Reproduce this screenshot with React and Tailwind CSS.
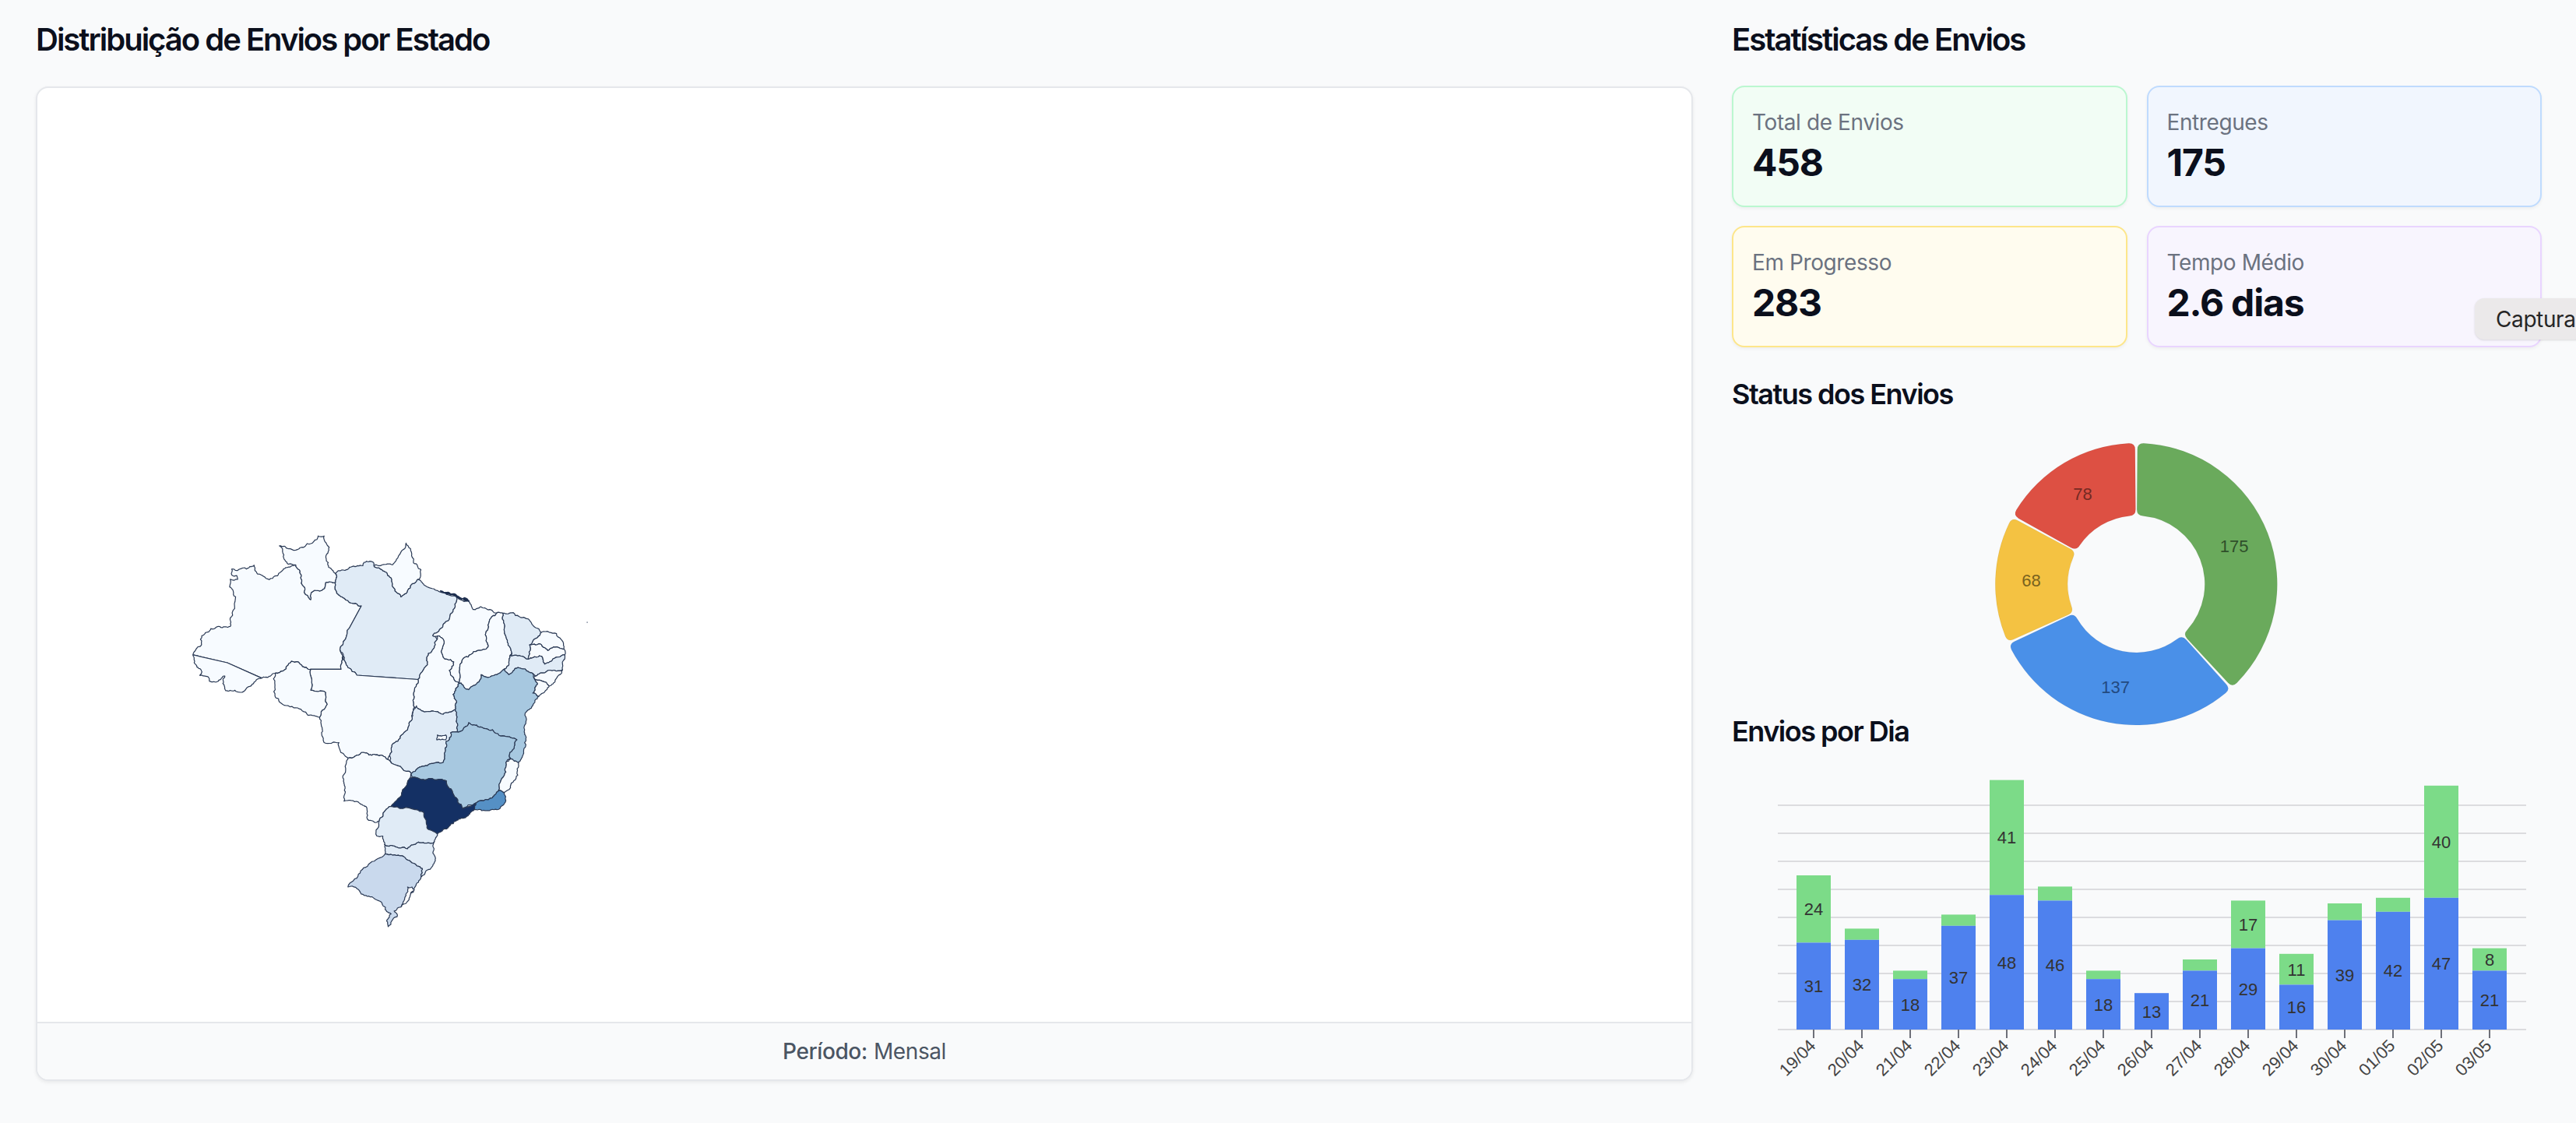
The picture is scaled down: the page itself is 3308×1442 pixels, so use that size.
import React from 'react';

const stats = [
  { label: 'Total de Envios', value: '458', box: 'bg-[#f2fdf5] border-[#bbf7d0]' },
  { label: 'Entregues', value: '175', box: 'bg-[#f1f6fe] border-[#bfdbfe]' },
  { label: 'Em Progresso', value: '283', box: 'bg-[#fffcef] border-[#fde68a]' },
  { label: 'Tempo Médio', value: '2.6 dias', box: 'bg-[#f8f5fe] border-[#e9d5ff]' },
];

const statusData = [
  { value: 175, color: '#6aaa5c', text: '#2f4f2a' },
  { value: 137, color: '#4a90e8', text: '#234a80' },
  { value: 68, color: '#f4c242', text: '#79621f' },
  { value: 78, color: '#dd5043', text: '#742a23' },
];

const days = [
  ['19/04', 31, 24], ['20/04', 32, 4], ['21/04', 18, 3], ['22/04', 37, 4], ['23/04', 48, 41],
  ['24/04', 46, 5], ['25/04', 18, 3], ['26/04', 13, 0], ['27/04', 21, 4], ['28/04', 29, 17],
  ['29/04', 16, 11], ['30/04', 39, 6], ['01/05', 42, 5], ['02/05', 47, 40], ['03/05', 21, 8],
];

const WHITE = '#f7fbff';
const LIGHT = '#e0ebf6';
const MID = '#c9d9ed';
const BLUE = '#a7c8e0';

// state outlines, coordinates in a 1568x1568 box stretched to 600x570
const states = [
  [WHITE, '125,525 135,505 150,495 150,470 165,450 185,432 215,425 250,425 258,385 268,320 260,300 248,285 250,258 275,258 272,245 255,243 255,222 305,222 330,208 342,240 370,255 392,255 420,232 450,215 470,207 482,225 490,260 498,305 520,330 522,305 545,298 560,295 570,270 603,270 606,300 625,320 650,340 690,352 650,430 618,507 628,530 622,576 520,576 490,562 478,550 455,548 440,565 430,580 400,590 385,600 355,607 240,553'],
  [WHITE, '125,525 240,553 355,607 330,622 300,650 290,657 265,650 235,652 230,635 232,600 210,618 180,618 175,602 148,598 155,585 135,560'],
  [WHITE, '415,140 445,150 470,155 490,145 530,125 545,105 565,105 572,130 582,145 572,185 580,215 603,238 603,270 570,270 560,295 545,298 522,305 520,330 498,305 490,260 482,225 470,207 445,205 430,172'],
  [LIGHT, '603,238 625,225 660,213 695,210 700,198 730,198 735,215 760,225 785,250 800,290 822,320 835,310 855,280 880,258 900,278 945,298 1010,320 1005,355 985,400 960,430 930,458 945,470 935,495 915,520 912,560 880,612 675,597 645,570 630,530 618,507 650,430 690,352 650,340 625,320 606,300 603,270'],
  [WHITE, '735,207 760,207 795,207 815,175 840,130 855,150 865,200 890,225 885,258 880,258 855,280 835,310 822,320 800,290 785,250 760,225 735,215'],
  [WHITE, '1010,320 1045,335 1065,365 1090,355 1120,365 1148,375 1125,395 1115,420 1110,465 1112,500 1080,510 1035,535 1020,570 1018,625 1000,610 985,580 1000,550 975,540 960,520 965,470 945,458 930,458 960,430 985,400 1005,355'],
  [WHITE, '945,458 965,470 960,520 975,540 1000,550 985,580 1000,610 1018,625 998,665 1010,690 1005,718 965,735 940,725 915,725 880,715 868,710 865,660 880,612 912,560 915,520 935,495 945,470'],
  [WHITE, '1148,375 1165,378 1170,430 1180,480 1195,520 1185,550 1170,575 1140,595 1115,605 1092,595 1085,620 1050,648 1035,640 1025,625 1018,625 1020,570 1035,535 1080,510 1112,500 1110,465 1115,420 1125,395'],
  [LIGHT, '1165,378 1200,376 1240,395 1265,420 1295,445 1270,470 1255,490 1250,540 1230,530 1190,528 1195,520 1180,480 1170,430'],
  [WHITE, '1295,445 1345,450 1360,470 1370,505 1335,497 1315,510 1295,490 1275,490 1255,490 1270,470'],
  [WHITE, '1255,490 1275,490 1295,490 1315,510 1335,497 1370,505 1373,525 1330,545 1305,558 1295,530 1265,535 1250,540'],
  [LIGHT, '1190,528 1230,530 1250,540 1265,535 1295,530 1305,558 1330,545 1373,525 1365,578 1310,585 1275,600 1265,590 1240,575 1215,570 1185,595 1170,575 1185,550 1195,520'],
  [WHITE, '1268,605 1275,600 1310,585 1365,578 1340,615 1320,635'],
  [WHITE, '1268,605 1320,635 1300,660 1285,672 1265,660 1280,630'],
  [BLUE, '1018,625 1025,625 1035,640 1050,648 1085,620 1092,595 1115,605 1140,595 1170,575 1185,595 1215,570 1240,575 1265,590 1268,605 1280,630 1265,660 1285,672 1265,705 1240,730 1238,790 1242,820 1232,880 1218,905 1190,890 1188,870 1212,825 1170,812 1130,790 1085,780 1050,765 1015,798 1008,760 1005,718 1010,690 998,665'],
  [LIGHT, '875,705 880,715 915,725 940,725 965,735 1005,718 1008,760 1015,798 990,800 985,825 975,830 970,880 965,905 920,910 880,925 858,943 795,910 785,880 790,855 820,820 845,790 860,745'],
  [WHITE, '945,808 973,808 973,825 943,825'],
  [WHITE, '520,576 622,576 628,530 645,570 675,597 880,612 865,660 868,710 860,745 845,790 820,820 790,855 785,880 780,895 760,880 725,880 690,870 645,890 618,860 615,835 565,835 560,795 550,745 575,700 570,658 520,650'],
  [WHITE, '400,590 430,580 440,565 455,548 478,550 490,562 520,576 520,650 570,658 575,700 550,745 510,738 470,712 420,695 400,670 395,610'],
  [WHITE, '645,890 690,870 725,880 760,880 780,895 795,910 858,943 850,965 825,1015 790,1060 770,1075 750,1112 715,1110 705,1060 680,1045 632,1042 635,990 628,960 640,905'],
  [BLUE, '858,943 880,925 920,910 965,905 970,880 975,830 985,825 990,800 1015,798 1050,765 1085,780 1130,790 1170,812 1212,825 1188,870 1190,890 1175,905 1170,950 1150,1005 1130,1030 1070,1050 1030,1068 1000,1020 975,970 910,965 860,958'],
  [WHITE, '1190,893 1218,905 1215,950 1190,990 1170,1012 1150,1005 1170,950 1175,905'],
  ['#5590c5', '1150,1005 1170,1012 1175,1040 1145,1072 1105,1075 1065,1075 1040,1068 1070,1050 1130,1030'],
  ['#143064', '860,958 910,965 975,970 1000,1020 1030,1068 1075,1050 1070,1070 1050,1090 1040,1100 1010,1110 985,1130 945,1158 910,1135 900,1085 870,1072 790,1060 825,1015 850,965'],
  [LIGHT, '790,1060 870,1072 900,1085 910,1135 945,1158 935,1185 905,1190 875,1190 845,1210 800,1200 768,1195 762,1165 742,1165 750,1112 770,1075'],
  [LIGHT, '768,1195 800,1200 845,1210 875,1190 905,1190 935,1185 930,1225 938,1240 930,1270 890,1310 895,1280 860,1260 820,1235 770,1228'],
  [MID, '770,1228 820,1235 860,1260 895,1280 890,1310 870,1345 830,1405 800,1430 810,1450 780,1485 775,1465 790,1440 775,1432 760,1405 720,1380 700,1375 665,1345 645,1345 680,1300 720,1260'],
  ['#ffffff', '845,1345 860,1345 868,1355 850,1390 825,1410 840,1375'],
];

// small deterministic noise so the borders look like real ones.
// the offset depends only on the edge, so neighbours share the same line
const noise = (a, b) => {
  const v = Math.sin(a * 12.9898 + b * 78.233) * 43758.5453;
  return v - Math.floor(v) - 0.5;
};

const roughEdge = (x1, y1, x2, y2, depth) => {
  const len = Math.hypot(x2 - x1, y2 - y1);
  if (depth === 0 || len > 85 || len < 7) return [];
  const mx = (x1 + x2) / 2;
  const my = (y1 + y2) / 2;
  const amount = noise(mx, my) * Math.min(len * 0.4, 9);
  const sign = x1 < x2 || (x1 === x2 && y1 < y2) ? 1 : -1;
  const px = mx + ((y2 - y1) / len) * amount * sign;
  const py = my - ((x2 - x1) / len) * amount * sign;
  return [...roughEdge(x1, y1, px, py, depth - 1), [px, py], ...roughEdge(px, py, x2, y2, depth - 1)];
};

const roughPath = (pointsText) => {
  const pts = pointsText.split(' ').map((p) => p.split(',').map(Number));
  const out = [];
  pts.forEach((p, i) => {
    const n = pts[(i + 1) % pts.length];
    out.push(p, ...roughEdge(p[0], p[1], n[0], n[1], 3));
  });
  return 'M' + out.map((p) => `${p[0].toFixed(1)} ${p[1].toFixed(1)}`).join('L') + 'Z';
};

const BrazilMap = () => (
  <svg width="600" height="570" viewBox="0 0 1568 1568" preserveAspectRatio="none">
    {states.map(([fill, pts], i) => (
      <path key={i} d={roughPath(pts)} fill={fill} stroke="#2b3a55" strokeWidth="1.2" strokeLinejoin="round" vectorEffect="non-scaling-stroke" />
    ))}
    <path d={roughPath('955,298 985,306 1010,316 1045,328 1052,336 1010,322 985,310')} fill="#1e2f4f" stroke="#1e2f4f" strokeWidth="1.6" vectorEffect="non-scaling-stroke" />
    <circle cx="1448" cy="410" r="2.5" fill="#8a93a3" />
  </svg>
);

// rounded ring slice, angles in degrees clockwise from the top
const polar = (r, deg) => {
  const a = (deg * Math.PI) / 180;
  return [r * Math.sin(a), -r * Math.cos(a)];
};

const slicePath = (start, end, R, r, c) => {
  const dO = (c / R) * (180 / Math.PI);
  const dI = (c / r) * (180 / Math.PI);
  const f = (p) => `${p[0].toFixed(2)} ${p[1].toFixed(2)}`;
  const large = end - start > 180 ? 1 : 0;
  return [
    `M${f(polar(R, start + dO))}`,
    `A${R} ${R} 0 ${large} 1 ${f(polar(R, end - dO))}`,
    `Q${f(polar(R, end))} ${f(polar(R - c, end))}`,
    `L${f(polar(r + c, end))}`,
    `Q${f(polar(r, end))} ${f(polar(r, end - dI))}`,
    `A${r} ${r} 0 ${large} 0 ${f(polar(r, start + dI))}`,
    `Q${f(polar(r, start))} ${f(polar(r + c, start))}`,
    `L${f(polar(R - c, start))}`,
    `Q${f(polar(R, start))} ${f(polar(R, start + dO))}`,
    'Z',
  ].join('');
};

const StatusDonut = () => {
  const total = statusData.reduce((sum, s) => sum + s.value, 0);
  let angle = 0;
  return (
    <svg width="1040" height="380" viewBox="-519.3 -190 1040 380" className="block">
      {statusData.map((s) => {
        const start = angle;
        const end = angle + (s.value / total) * 360;
        angle = end;
        const mid = (start + end) / 2;
        const [lx, ly] = polar(135, mid);
        return (
          <g key={s.value}>
            <path d={slicePath(start + 0.5, end - 0.5, 181, 88, 8)} fill={s.color} stroke="#000000" strokeOpacity="0.05" />
            <text x={lx} y={ly + 8} textAnchor="middle" fontSize="22" fill={s.text} fontFamily="'Liberation Sans', sans-serif">{s.value}</text>
          </g>
        );
      })}
    </svg>
  );
};

const DailyBars = () => {
  const baseY = 1322;
  const unit = 3.6;
  const grid = [1034, 1070, 1106, 1142, 1178, 1214, 1250, 1286, 1322];
  const font = "'Liberation Sans', sans-serif";
  return (
    <svg width="1040" height="419" viewBox="2224 963 1040 419" className="block">
      {grid.map((y) => (
        <line key={y} x1="2283" x2="3244" y1={y} y2={y} stroke="#dcdcdf" strokeWidth="2" />
      ))}
      {days.map(([day, blue, green], i) => {
        const cx = 2329 + i * 62;
        const blueTop = baseY - blue * unit;
        const greenTop = blueTop - green * unit;
        return (
          <g key={day}>
            <rect x={cx - 22} y={greenTop} width="44" height={green * unit} fill="#7cdb88" />
            <rect x={cx - 22} y={blueTop} width="44" height={blue * unit} fill="#4e81ee" />
            <line x1={cx} x2={cx} y1={baseY} y2={baseY + 11} stroke="#6e7079" strokeWidth="2" />
            <text x={cx} y={blueTop + (blue * unit) / 2 + 8} textAnchor="middle" fontSize="22" fill="#333333" fontFamily={font}>{blue}</text>
            {green >= 8 && (
              <text x={cx} y={greenTop + (green * unit) / 2 + 8} textAnchor="middle" fontSize="22" fill="#333333" fontFamily={font}>{green}</text>
            )}
            <text transform={`translate(${cx + 4} 1344) rotate(-45)`} textAnchor="end" fontSize="22" fill="#444444" fontFamily={font}>{day}</text>
          </g>
        );
      })}
    </svg>
  );
};

const App = () => {
  return (
    <div className="relative h-[1442px] overflow-hidden bg-[#f9fafb] font-['Inter',sans-serif] text-[#0b0f1c]">
      <div className="flex gap-[50px] pl-[46px] pr-[44px] pt-[27px]">
        {/* Map column */}
        <div className="flex-1 min-w-0">
          <h2 className="h-[48px] mb-[36px] text-[40px] leading-[48px] font-semibold tracking-[-2px]">Distribuição de Envios por Estado</h2>
          <div className="h-[1277px] flex flex-col overflow-hidden rounded-2xl border-2 border-[#e5e7eb] bg-white shadow-[0_2px_5px_rgba(0,0,0,0.07)]">
            <div className="flex-1 flex items-end pl-[152px] pb-[92px]">
              <BrazilMap />
            </div>
            <div className="h-[74px] flex items-center justify-center border-t-2 border-[#e5e7eb] bg-[#f9fafb] text-[28px] tracking-[-0.4px] text-[#4b5563]">
              <span className="font-medium">Período:</span>
              <span className="ml-[8px]">Mensal</span>
            </div>
          </div>
        </div>

        {/* Stats column */}
        <div className="w-[1040px] shrink-0">
          <h2 className="h-[48px] mb-[35px] text-[40px] leading-[48px] font-semibold tracking-[-2px]">Estatísticas de Envios</h2>
          <div className="grid grid-cols-2 gap-x-[25px] gap-y-[24px]">
            {stats.map((s) => (
              <div key={s.label} className={`h-[156px] rounded-2xl border-2 px-[24px] pt-[25px] shadow-[0_2px_4px_rgba(0,0,0,0.05)] ${s.box}`}>
                <p className="text-[28px] leading-[40px] tracking-[-0.4px] text-[#6b7280]">{s.label}</p>
                <p className="text-[48px] leading-[64px] font-bold tracking-[-1.2px]">{s.value}</p>
              </div>
            ))}
          </div>

          <h3 className="h-[48px] mt-[36px] text-[36px] leading-[48px] font-semibold tracking-[-1.5px]">Status dos Envios</h3>
          <div className="mt-[30px]">
            <StatusDonut />
          </div>

          <h3 className="relative h-[48px] -mt-[25px] text-[36px] leading-[48px] font-semibold tracking-[-1.5px]">Envios por Dia</h3>
          <DailyBars />
        </div>
      </div>

      <div className="absolute top-[383px] left-[3178px] h-[53px] w-[140px] flex items-center pl-[27px] rounded-xl bg-[#ebe9ea] text-[28px] tracking-[-0.4px] text-[#262626] shadow-sm">
        Captura
      </div>
    </div>
  );
};

export default App;
